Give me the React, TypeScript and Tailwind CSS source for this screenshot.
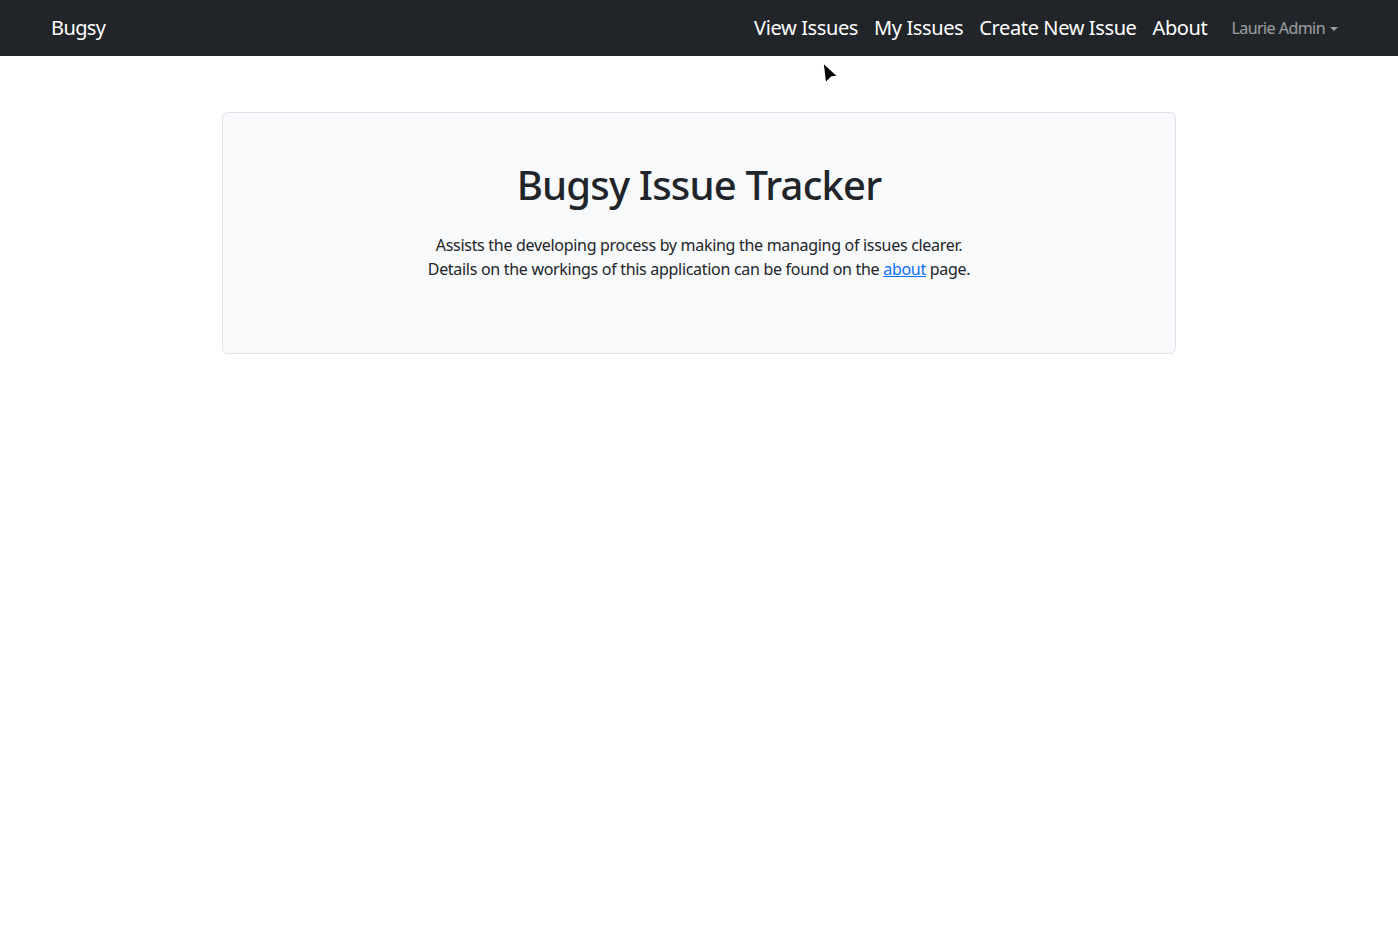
const links = ["View Issues", "My Issues", "Create New Issue", "About"];

function NavLink({ label }: { label: string }) {
  return (
    <a href="#" className="px-2 text-[20px] leading-[30px] tracking-[-0.38px] text-white">
      {label}
    </a>
  );
}

export default function App() {
  return (
    <div className="relative min-h-[938px] w-full bg-white text-[#212529] font-['Noto_Sans',sans-serif]">
      <nav className="flex h-14 items-center justify-between bg-[#212529] pl-[51px] pr-[52px]">
        <a href="#" className="text-[20px] leading-[30px] tracking-[-0.6px] text-white">
          Bugsy
        </a>
        <div className="flex items-center">
          {links.map((l) => (
            <NavLink key={l} label={l} />
          ))}
          <button className="ml-2 flex items-center px-2 text-[16px] leading-6 tracking-[-0.55px] text-white/55">
            Laurie Admin
            <span className="ml-[5px] mt-[1px] h-0 w-0 border-x-[4px] border-t-[4px] border-x-transparent border-t-white/55" />
          </button>
        </div>
      </nav>

      <main className="pt-14">
        <section className="mx-auto w-[954px] rounded-md border border-[#dee2e6] bg-[#f8f9fa] px-12 pb-[72px] pt-12 text-center">
          <h1 className="text-[40px] font-medium leading-[48px] tracking-[-0.8px]">Bugsy Issue Tracker</h1>
          <p className="mt-6 text-[16px] leading-6 tracking-[-0.3px]">
            Assists the developing process by making the managing of issues clearer.
            <br />
            Details on the workings of this application can be found on the{" "}
            <a href="#" className="text-[#0d6efd] underline">
              about
            </a>{" "}
            page.
          </p>
        </section>
      </main>

      {/* mouse pointer */}
      <svg className="absolute left-[821px] top-[61px]" width="20" height="24" viewBox="0 0 20 24">
        <path d="M2 1.5 L17 15.5 L10.5 16 L4.5 22 Z" fill="#000" stroke="#fff" strokeWidth="1.3" strokeLinejoin="round" />
      </svg>
    </div>
  );
}
